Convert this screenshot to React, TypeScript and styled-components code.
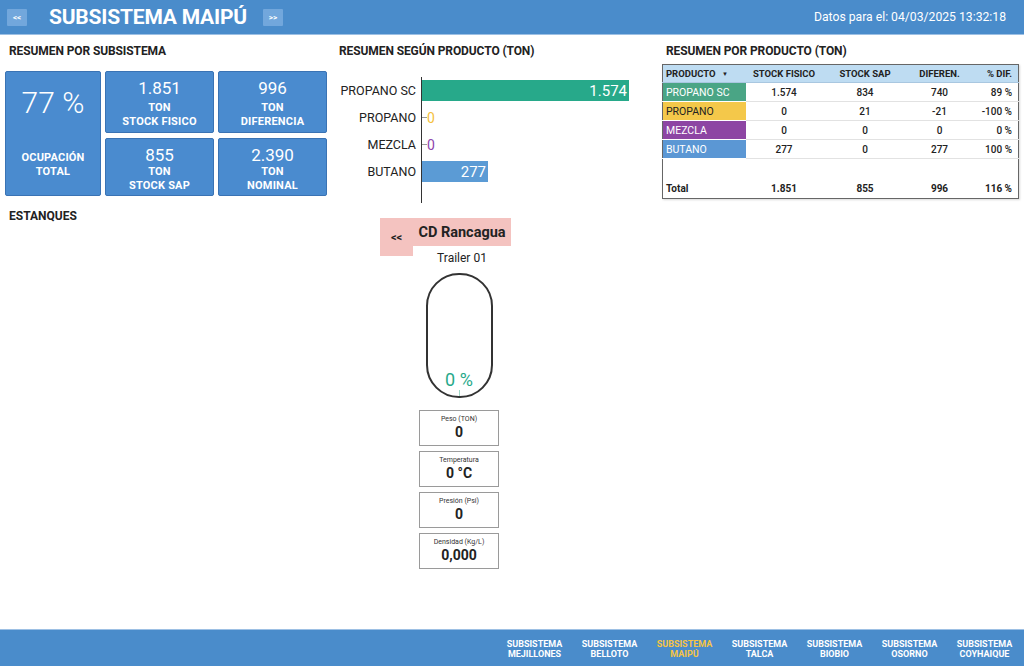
import React from 'react';
import styled, { createGlobalStyle } from 'styled-components';

const GlobalStyle = createGlobalStyle`
  html, body {
    margin: 0;
    padding: 0;
    background: #ffffff;
  }
  body {
    font-family: Roboto, "Liberation Sans", Arial, sans-serif;
    color: #222;
  }
`;

const BLUE = '#4a8ccb';

interface Product {
  name: string;
  color: string;
  textColor: string;
  fisico: string;
  sap: string;
  dif: string;
  pct: string;
  barWidth: number;
}

const products: Product[] = [
  { name: 'PROPANO SC', color: '#4aa585', textColor: '#fff', fisico: '1.574', sap: '834', dif: '740', pct: '89 %', barWidth: 207 },
  { name: 'PROPANO', color: '#f4c84a', textColor: '#222', fisico: '0', sap: '21', dif: '-21', pct: '-100 %', barWidth: 0 },
  { name: 'MEZCLA', color: '#8d45a3', textColor: '#fff', fisico: '0', sap: '0', dif: '0', pct: '0 %', barWidth: 0 },
  { name: 'BUTANO', color: '#5b97d4', textColor: '#fff', fisico: '277', sap: '0', dif: '277', pct: '100 %', barWidth: 66 },
];

const barColors: Record<string, string> = {
  'PROPANO SC': '#27a98a',
  PROPANO: '#f5bf3c',
  MEZCLA: '#8e44ad',
  BUTANO: '#5b9bd5',
};

const subsistemas = ['MEJILLONES', 'BELLOTO', 'MAIPÚ', 'TALCA', 'BIOBIO', 'OSORNO', 'COYHAIQUE'];

const readings = [
  { label: 'Peso (TON)', value: '0' },
  { label: 'Temperatura', value: '0 °C' },
  { label: 'Presión (Psi)', value: '0' },
  { label: 'Densidad (Kg/L)', value: '0,000' },
];

export default function App() {
  return (
    <Page>
      <GlobalStyle />
      <Header>
        <HeaderLeft>
          <NavButton>&lt;&lt;</NavButton>
          <HeaderTitle>SUBSISTEMA MAIPÚ</HeaderTitle>
          <NavButton>&gt;&gt;</NavButton>
        </HeaderLeft>
        <HeaderDate>Datos para el: 04/03/2025 13:32:18</HeaderDate>
      </Header>

      <Summary>
        <Column>
          <SectionTitle $indent={4}>RESUMEN POR SUBSISTEMA</SectionTitle>
          <Tiles>
            <BigTile>
              <BigValue>77 %</BigValue>
              <TileLabel>OCUPACIÓN</TileLabel>
              <TileLabel>TOTAL</TileLabel>
            </BigTile>
            <Tile $gap={3}>
              <TileValue>1.851</TileValue>
              <TileLabel>TON</TileLabel>
              <TileLabel>STOCK FISICO</TileLabel>
            </Tile>
            <Tile $gap={3}>
              <TileValue>996</TileValue>
              <TileLabel>TON</TileLabel>
              <TileLabel>DIFERENCIA</TileLabel>
            </Tile>
            <Tile $gap={0}>
              <TileValue>855</TileValue>
              <TileLabel>TON</TileLabel>
              <TileLabel>STOCK SAP</TileLabel>
            </Tile>
            <Tile $gap={0}>
              <TileValue>2.390</TileValue>
              <TileLabel>TON</TileLabel>
              <TileLabel>NOMINAL</TileLabel>
            </Tile>
          </Tiles>
        </Column>

        <Column>
          <SectionTitle $indent={0}>RESUMEN SEGÚN PRODUCTO (TON)</SectionTitle>
          <Chart>
            <ChartLabels>
              {products.map((p) => (
                <ChartLabel key={p.name}>{p.name}</ChartLabel>
              ))}
            </ChartLabels>
            <ChartBars>
              {products.map((p) => (
                <BarRow key={p.name}>
                  {p.barWidth > 0 ? (
                    <Bar $color={barColors[p.name]} style={{ width: p.barWidth }}>
                      {p.fisico}
                    </Bar>
                  ) : (
                    <>
                      <ZeroTick />
                      <ZeroValue $color={barColors[p.name]}>{p.fisico}</ZeroValue>
                    </>
                  )}
                </BarRow>
              ))}
            </ChartBars>
          </Chart>
        </Column>

        <Column>
          <SectionTitle $indent={4}>RESUMEN POR PRODUCTO (TON)</SectionTitle>
          <Table>
            <colgroup>
              <col style={{ width: 83 }} />
              <col style={{ width: 80 }} />
              <col style={{ width: 82 }} />
              <col style={{ width: 67 }} />
              <col />
            </colgroup>
            <thead>
              <tr>
                <Th $align="left">
                  PRODUCTO <Caret>▼</Caret>
                </Th>
                <Th $align="center">STOCK FISICO</Th>
                <Th $align="center">STOCK SAP</Th>
                <Th $align="center">DIFEREN.</Th>
                <Th $align="right">% DIF.</Th>
              </tr>
            </thead>
            <tbody>
              {products.map((p) => (
                <tr key={p.name}>
                  <NameCell $bg={p.color} $fg={p.textColor}>
                    {p.name}
                  </NameCell>
                  <Td $align="center">{p.fisico}</Td>
                  <Td $align="center">{p.sap}</Td>
                  <Td $align="center">{p.dif}</Td>
                  <Td $align="right">{p.pct}</Td>
                </tr>
              ))}
              <SpacerRow>
                <td colSpan={5} />
              </SpacerRow>
              <tr>
                <TotalCell $align="left">Total</TotalCell>
                <TotalCell $align="center">1.851</TotalCell>
                <TotalCell $align="center">855</TotalCell>
                <TotalCell $align="center">996</TotalCell>
                <TotalCell $align="right">116 %</TotalCell>
              </tr>
            </tbody>
          </Table>
        </Column>
      </Summary>

      <Tanks>
        <TanksTitle>ESTANQUES</TanksTitle>
        <TankCard>
          <BackButton>&lt;&lt;</BackButton>
          <CardTitle>CD Rancagua</CardTitle>
          <TrailerName>Trailer 01</TrailerName>
          <TankBody>
            <TankShape>
              <TankLevel>0 %</TankLevel>
              <TankMark />
            </TankShape>
            {readings.map((r) => (
              <Reading key={r.label}>
                <ReadingLabel>{r.label}</ReadingLabel>
                <ReadingValue>{r.value}</ReadingValue>
              </Reading>
            ))}
          </TankBody>
        </TankCard>
      </Tanks>

      <Footer>
        {subsistemas.map((s) => (
          <FooterItem key={s} $active={s === 'MAIPÚ'}>
            SUBSISTEMA
            <br />
            {s}
          </FooterItem>
        ))}
      </Footer>
    </Page>
  );
}

const Page = styled.div`
  min-height: 100vh;
  display: flex;
  flex-direction: column;
`;

const Header = styled.header`
  height: 34px;
  background: ${BLUE};
  border-bottom: 1px solid #9dc0e4;
  display: flex;
  align-items: center;
  justify-content: space-between;
  padding: 0 18px 0 7px;
`;

const HeaderLeft = styled.div`
  display: flex;
  align-items: center;
`;

const NavButton = styled.div`
  width: 20px;
  height: 17px;
  background: #72a7dc;
  color: #fff;
  font-size: 8px;
  font-weight: 700;
  display: flex;
  align-items: center;
  justify-content: center;
  border-radius: 1px;
`;

const HeaderTitle = styled.h1`
  margin: 0 16px 0 22px;
  font-size: 21px;
  font-weight: 700;
  color: #fff;
  letter-spacing: -0.2px;
`;

const HeaderDate = styled.div`
  color: #fff;
  font-size: 12.2px;
`;

const Summary = styled.section`
  display: grid;
  grid-template-columns: 322px 1fr 357px;
  column-gap: 12px;
  align-items: start;
  padding: 9px 5px 0;
`;

const Column = styled.div`
  display: flex;
  flex-direction: column;
`;

const SectionTitle = styled.h2<{ $indent: number }>`
  margin: 0;
  padding-left: ${(p) => p.$indent}px;
  font-size: 12px;
  line-height: 14px;
  font-weight: 700;
  color: #222;
  letter-spacing: -0.1px;
`;

const Tiles = styled.div`
  margin-top: 13px;
  display: grid;
  grid-template-columns: 96px 109px 109px;
  grid-template-rows: 62px 58px;
  gap: 5px 4px;
`;

const TileBase = styled.div`
  background: #4a8bcf;
  border: 1px solid #3a73b4;
  border-radius: 2px;
  color: #fff;
  display: flex;
  flex-direction: column;
  align-items: center;
  box-sizing: border-box;
`;

const BigTile = styled(TileBase)`
  grid-row: 1 / 3;
  padding-top: 13px;
`;

const BigValue = styled.div`
  font-size: 30px;
  font-weight: 300;
  line-height: 36px;
  margin-bottom: 30px;
`;

const Tile = styled(TileBase)<{ $gap: number }>`
  padding-top: 6px;
  & > :first-child {
    margin-bottom: ${(p) => p.$gap}px;
  }
`;

const TileValue = styled.div`
  font-size: 17px;
  line-height: 20px;
`;

const TileLabel = styled.div`
  font-size: 11px;
  font-weight: 700;
  line-height: 14px;
  letter-spacing: 0.2px;
`;

const Chart = styled.div`
  margin-top: 19px;
  display: flex;
`;

const ChartLabels = styled.div`
  width: 77px;
  margin-right: 5px;
  display: flex;
  flex-direction: column;
`;

const ChartLabel = styled.div`
  height: 27px;
  display: flex;
  align-items: center;
  justify-content: flex-end;
  font-size: 12.5px;
  color: #222;
  white-space: nowrap;
`;

const ChartBars = styled.div`
  flex: 1;
  border-left: 1px solid #333;
  padding-bottom: 18px;
  display: flex;
  flex-direction: column;
`;

const BarRow = styled.div`
  height: 27px;
  display: flex;
  align-items: center;
`;

const Bar = styled.div<{ $color: string }>`
  height: 21px;
  background: ${(p) => p.$color};
  color: #fff;
  font-size: 15px;
  display: flex;
  align-items: center;
  justify-content: flex-end;
  padding-right: 2px;
  box-sizing: border-box;
`;

const ZeroTick = styled.div`
  width: 5px;
  height: 1px;
  background: #999;
`;

const ZeroValue = styled.span<{ $color: string }>`
  color: ${(p) => p.$color};
  font-size: 14px;
`;

const Table = styled.table`
  margin-top: 6px;
  width: 357px;
  border-collapse: collapse;
  border: 1px solid #666;
  box-shadow: 1px 1px 2px rgba(0, 0, 0, 0.15);
  font-size: 10px;
  table-layout: fixed;
`;

type Align = 'left' | 'center' | 'right';

const Th = styled.th<{ $align: Align }>`
  background: #bedcf2;
  height: 17px;
  padding: 0 6px 0 3px;
  text-align: ${(p) => p.$align};
  font-weight: 700;
  font-size: 9.5px;
  color: #222;
  white-space: nowrap;
  overflow: hidden;
  border-bottom: 1px solid #a9c7e0;
`;

const Caret = styled.span`
  font-size: 6px;
  margin-left: 4px;
  vertical-align: 1px;
`;

const NameCell = styled.td<{ $bg: string; $fg: string }>`
  background: ${(p) => p.$bg};
  color: ${(p) => p.$fg};
  height: 18px;
  padding: 0 3px;
  font-size: 10.5px;
  border-bottom: 1px solid #fff;
  white-space: nowrap;
  overflow: hidden;
`;

const Td = styled.td<{ $align: Align }>`
  height: 18px;
  padding: 0 6px 0 3px;
  text-align: ${(p) => p.$align};
  font-weight: 500;
  color: #222;
  white-space: nowrap;
  border-bottom: 1px solid #e2e2e2;
`;

const SpacerRow = styled.tr`
  height: 22px;
`;

const TotalCell = styled.td<{ $align: Align }>`
  height: 16px;
  padding: 0 6px 1px 3px;
  text-align: ${(p) => p.$align};
  font-weight: 700;
  color: #222;
  white-space: nowrap;
`;

const Tanks = styled.section`
  display: flex;
  padding: 6px 0 0 9px;
`;

const TanksTitle = styled.h2`
  margin: 0;
  width: 371px;
  font-size: 12px;
  line-height: 14px;
  font-weight: 700;
  color: #222;
`;

const TankCard = styled.div`
  margin-top: 9px;
  display: grid;
  grid-template-columns: 33px 98px;
  grid-template-rows: 28px auto;
`;

const BackButton = styled.div`
  grid-row: 1 / 3;
  grid-column: 1;
  height: 38px;
  background: #f4c3c0;
  font-size: 11px;
  font-weight: 700;
  color: #222;
  display: flex;
  align-items: center;
  justify-content: center;
  padding-top: 1px;
  box-sizing: border-box;
`;

const CardTitle = styled.div`
  grid-row: 1;
  grid-column: 2;
  background: #f4c3c0;
  font-size: 14.5px;
  font-weight: 700;
  color: #222;
  display: flex;
  align-items: center;
  justify-content: center;
`;

const TrailerName = styled.div`
  grid-row: 2;
  grid-column: 2;
  text-align: center;
  font-size: 12px;
  line-height: 16px;
  padding-top: 4px;
  color: #222;
`;

const TankBody = styled.div`
  grid-column: 1 / -1;
  margin-left: 39px;
  width: 80px;
  display: flex;
  flex-direction: column;
  align-items: center;
`;

const TankShape = styled.div`
  margin-top: 7px;
  width: 67px;
  height: 125px;
  border: 2px solid #333;
  border-radius: 33px;
  box-sizing: border-box;
  display: flex;
  flex-direction: column;
  justify-content: flex-end;
  align-items: center;
  margin-bottom: 12px;
`;

const TankLevel = styled.div`
  color: #27a98a;
  font-size: 18px;
  line-height: 20px;
`;

const TankMark = styled.div`
  width: 1px;
  height: 6px;
  background: #9fd6c6;
`;

const Reading = styled.div`
  width: 80px;
  height: 36px;
  border: 1px solid #9a9a9a;
  box-sizing: border-box;
  display: flex;
  flex-direction: column;
  align-items: center;
  padding-top: 4px;
  margin-bottom: 5px;
`;

const ReadingLabel = styled.div`
  font-size: 7px;
  line-height: 9px;
  color: #333;
`;

const ReadingValue = styled.div`
  font-size: 14px;
  font-weight: 700;
  line-height: 16px;
  color: #222;
`;

const Footer = styled.footer`
  margin-top: auto;
  height: 36px;
  background: ${BLUE};
  border-top: 1px solid #9dc0e4;
  display: flex;
  align-items: center;
  justify-content: flex-end;
  padding-right: 2px;
`;

const FooterItem = styled.div<{ $active: boolean }>`
  width: 75px;
  text-align: center;
  font-size: 9px;
  line-height: 10px;
  font-weight: 700;
  color: ${(p) => (p.$active ? '#f6c445' : '#fff')};
  padding-top: 1px;
`;
